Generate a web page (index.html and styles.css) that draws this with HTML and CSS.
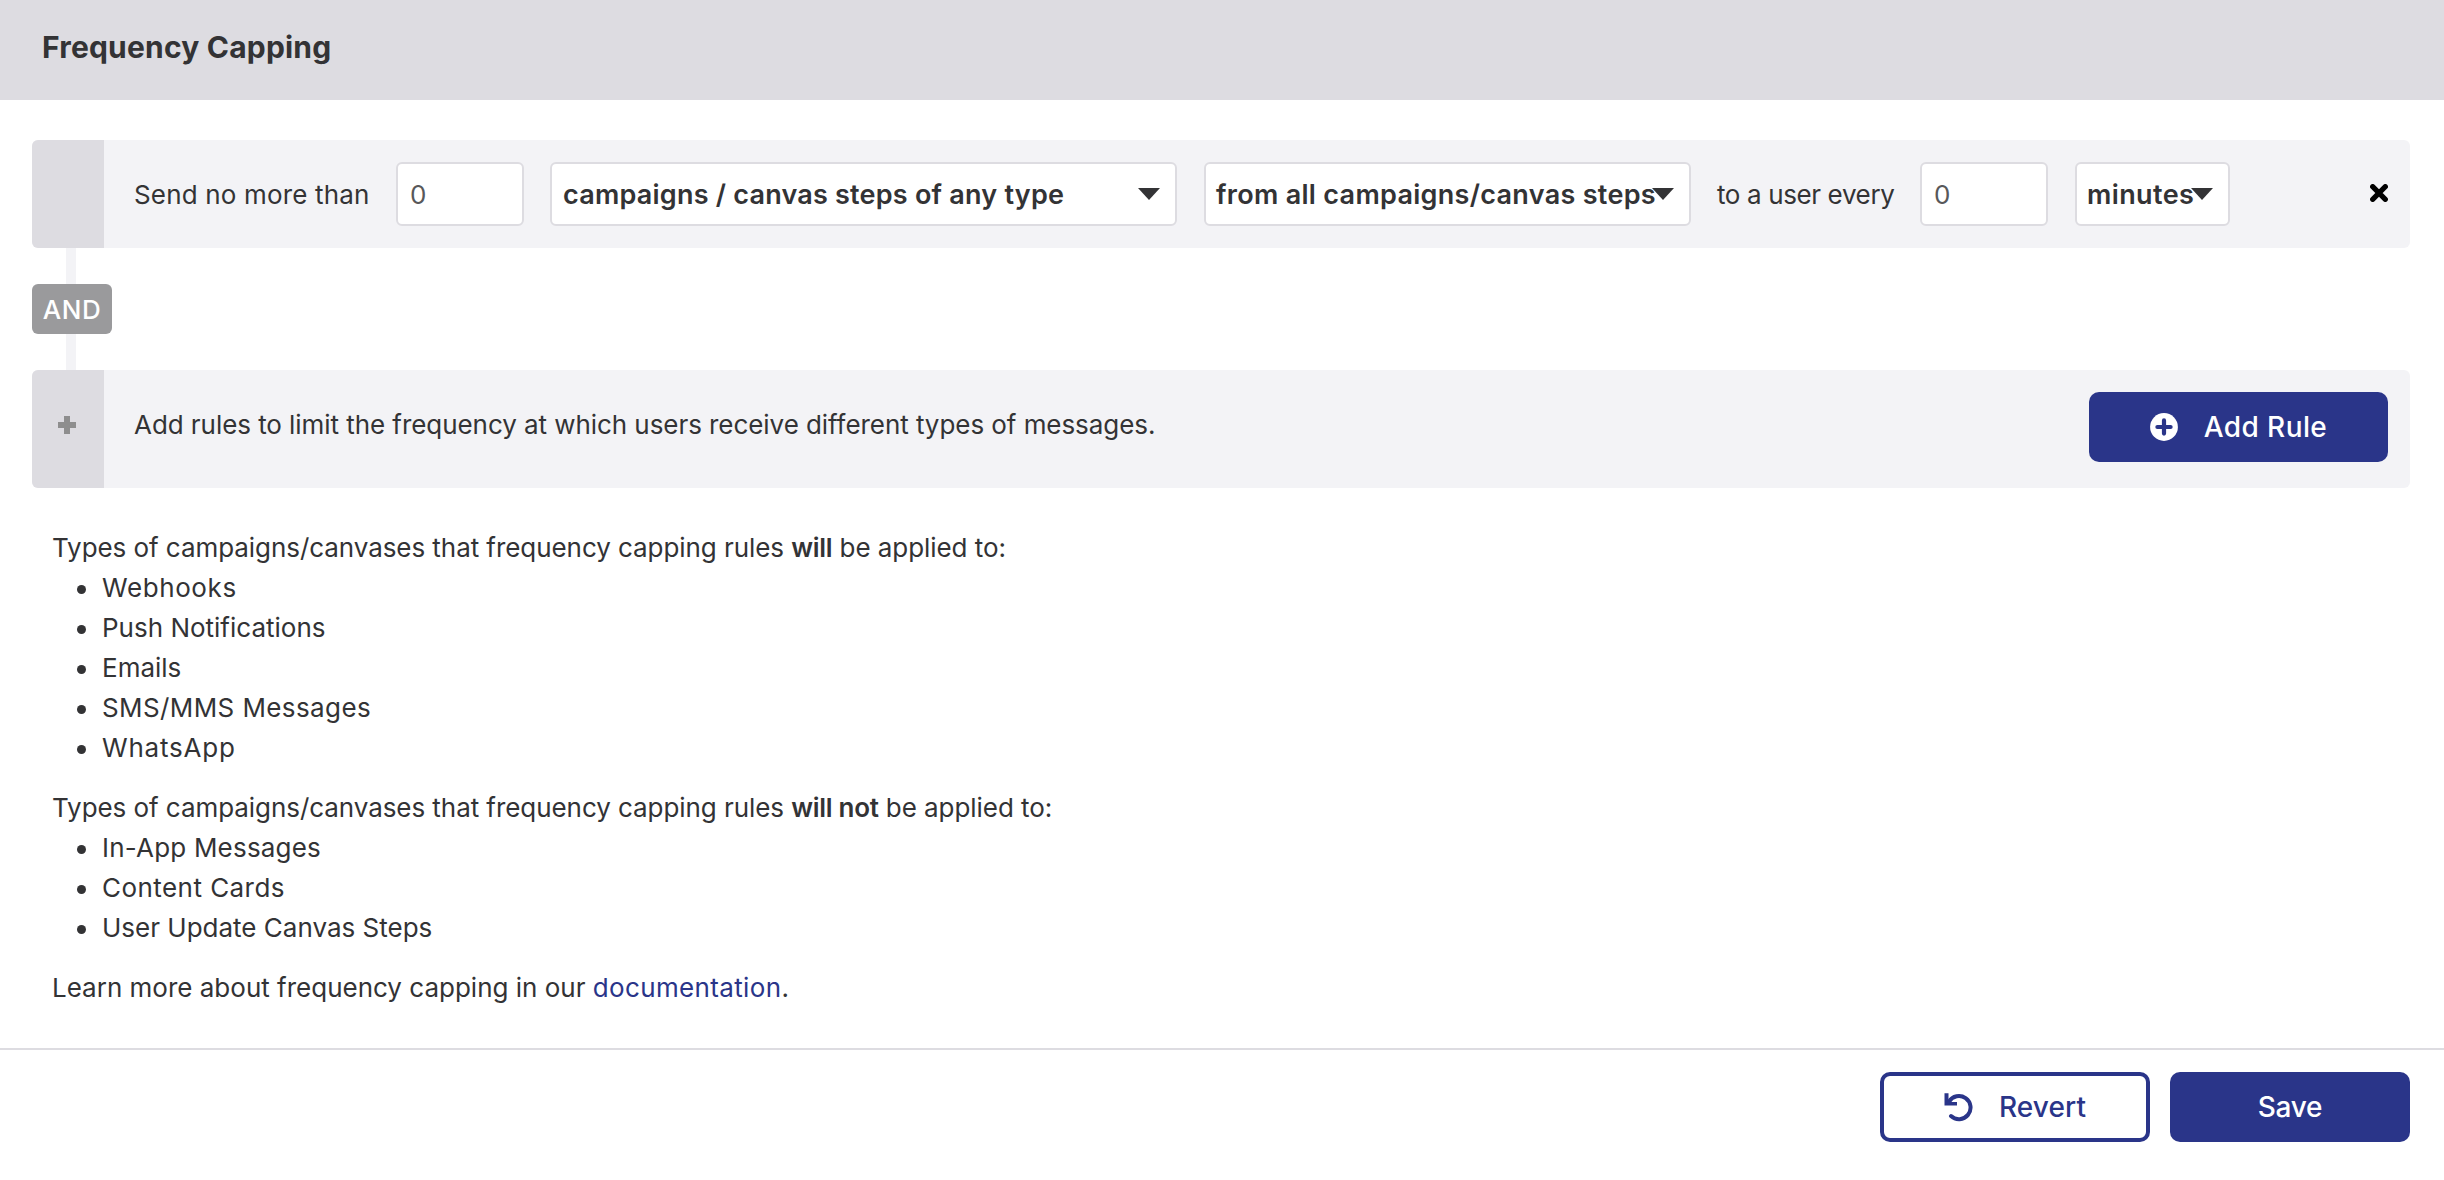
FILE: index.html
```html
<!DOCTYPE html>
<html lang="en">
<head>
<meta charset="utf-8">
<title>Frequency Capping</title>
<link rel="stylesheet" href="styles.css">
</head>
<body>
<header class="panel-header"><h1 class="title">Frequency Capping</h1></header>

<main class="content">
  <section class="rule">
    <div class="handle"></div>
    <div class="rule-body">
      <span class="label label-send">Send no more than</span>
      <input class="number number-limit" type="text" value="0" aria-label="Limit">
      <div class="select select-type" role="combobox"><span>campaigns / canvas steps of any type</span><svg class="arrow" viewBox="0 0 22 12"><path d="M0 0h22L11 12z"/></svg></div>
      <div class="select select-source" role="combobox"><span>from all campaigns/canvas steps</span><svg class="arrow" viewBox="0 0 22 12"><path d="M0 0h22L11 12z"/></svg></div>
      <span class="label label-every">to a user every</span>
      <input class="number number-window" type="text" value="0" aria-label="Window">
      <div class="select select-unit" role="combobox"><span>minutes</span><svg class="arrow" viewBox="0 0 22 12"><path d="M0 0h22L11 12z"/></svg></div>
      <svg class="remove" viewBox="0 0 18 18"><path d="M2.7 2.7l12.6 12.6M15.3 2.7L2.7 15.3"/></svg>
    </div>
  </section>

  <div class="joiner"><span class="and">AND</span></div>

  <section class="rule rule-add">
    <div class="handle"><svg class="plus" viewBox="0 0 18 18"><path d="M6 0h6v6h6v6h-6v6H6v-6H0V6h6z"/></svg></div>
    <div class="rule-body">
      <span class="hint">Add rules to limit the frequency at which users receive different types of messages.</span>
      <button class="btn btn-primary btn-add"><svg class="btn-icon" viewBox="0 0 28 28"><circle cx="14" cy="14" r="13.9" fill="#fff"/><path d="M14 7.4v13.2M7.4 14h13.2" stroke="#2a3589" stroke-width="4.2" stroke-linecap="round"/></svg>Add Rule</button>
    </div>
  </section>

  <div class="info">
    <p class="types">Types of campaigns/canvases that frequency capping rules <b class="will">will</b> be applied to:</p>
    <ul class="list">
      <li class="webhooks">Webhooks</li>
      <li>Push Notifications</li>
      <li>Emails</li>
      <li class="sms">SMS/MMS Messages</li>
      <li class="whatsapp">WhatsApp</li>
    </ul>
    <p class="types">Types of campaigns/canvases that frequency capping rules <b class="will">will not</b> be applied to:</p>
    <ul class="list">
      <li class="in-app">In-App Messages</li>
      <li class="cards">Content Cards</li>
      <li>User Update Canvas Steps</li>
    </ul>
    <p>Learn more about frequency capping in our <a class="link" href="#">documentation</a>.</p>
  </div>
</main>

<footer class="footer">
  <button class="btn btn-outline"><svg class="btn-icon revert-icon" viewBox="0 0 29 30"><path d="M.5 1.3h4v6.4l3 2.3h5.5v3.4H.5z" fill="#2a3589"/><path d="M5 9.6A11.6 11.6 0 1 1 7 24" fill="none" stroke="#2a3589" stroke-width="4" stroke-linecap="round"/></svg>Revert</button>
  <button class="btn btn-primary btn-save">Save</button>
</footer>
</body>
</html>
```
FILE: styles.css
```css
* { box-sizing: border-box; }
body { margin: 0; background: #fff; color: #333335; font: 400 26px/40px Inter, "Liberation Sans", sans-serif; }
h1, p, ul { margin: 0; }
svg { display: block; flex: none; }

.panel-header { height: 100px; padding: 27px 42px 0; background: #dddce1; }
.title { font-size: 30px; font-weight: 700; line-height: 40px; letter-spacing: 0.2px; }

.content { padding: 40px 34px 0 32px; }

.rule { display: flex; height: 108px; background: #f3f3f6; border-radius: 6px; }
.rule-add { height: 118px; }
.handle { flex: none; width: 72px; background: #dddce1; border-radius: 6px 0 0 6px; }
.rule-body { flex: 1; display: flex; align-items: flex-start; padding: 22px 22px 0 30px; white-space: nowrap; }
.label, .hint { line-height: 66px; }
.label-send { width: 262px; letter-spacing: 0.17px; }
.label-every { width: 203px; margin-left: 1px; letter-spacing: -0.38px; }
.hint { letter-spacing: -0.06px; }

.number, .select { height: 64px; background: #fff; border: 2px solid #dddce1; border-radius: 6px; }
.number { width: 128px; padding: 0 12px; color: #58585a; font: inherit; }
.number-limit { margin-right: 26px; }
.number-window { margin-right: 27px; }
.select { position: relative; padding-left: 11px; font-size: 27px; font-weight: 600; line-height: 61px; letter-spacing: 0.22px; }
.select-type { width: 627px; margin-right: 27px; }
.select-source { width: 487px; padding-left: 10px; margin-right: 25px; letter-spacing: 0.3px; }
.select-unit { width: 155px; padding-left: 10px; letter-spacing: 0.4px; }
.arrow { position: absolute; top: 24px; right: 15px; width: 22px; height: 12px; fill: #333335; }
.remove { width: 18px; height: 18px; margin: 22px 0 0 auto; fill: none; stroke: #000; stroke-width: 5.2; stroke-linecap: round; }

.joiner { display: flex; align-items: center; height: 122px; background: linear-gradient(#f3f3f6, #f3f3f6) 34px 0 / 10px 100% no-repeat; }
.and { width: 80px; height: 50px; background: #9a9a9c; border-radius: 6px; color: #fff; font-weight: 500; line-height: 51px; letter-spacing: 0.5px; text-align: center; }
.plus { width: 18px; height: 18px; margin: 46px 0 0 26px; fill: #8e8e8e; }

.btn { display: flex; align-items: center; justify-content: center; height: 70px; border: 0; border-radius: 10px; font: 500 28px/70px Inter, "Liberation Sans", sans-serif; }
.btn-primary { background: #2a3589; color: #fff; }
.btn-outline { width: 270px; background: #fff; border: 4px solid #2a3589; color: #2a3589; line-height: 62px; letter-spacing: 0.1px; }
.btn-add { width: 299px; margin-left: auto; letter-spacing: 0.4px; }
.btn-save { width: 240px; letter-spacing: -0.3px; }
.btn-icon { width: 28px; height: 28px; margin-right: 26px; }

.info { padding: 40px 20px 0; }
.types { letter-spacing: -0.06px; }
.will { font-weight: 600; letter-spacing: -0.3px; }
.list { padding: 0; margin-bottom: 20px; list-style: none; }
.list li { display: flex; align-items: center; padding-left: 24px; }
.list li::before { content: ""; width: 9px; height: 9px; margin: 3px 16px 0 1px; border-radius: 50%; background: #333335; }
.webhooks { letter-spacing: 0.6px; }
.sms { letter-spacing: 0.4px; }
.whatsapp { letter-spacing: 0.8px; }
.in-app { letter-spacing: 0.2px; }
.cards { letter-spacing: 0.45px; }
.link { color: #2a3589; text-decoration: none; letter-spacing: 0.35px; }

.footer { display: flex; justify-content: flex-end; gap: 20px; margin-top: 40px; padding: 22px 34px 0; border-top: 2px solid #dddce1; }
.revert-icon { width: 29px; height: 30px; margin-right: 26px; }
```
